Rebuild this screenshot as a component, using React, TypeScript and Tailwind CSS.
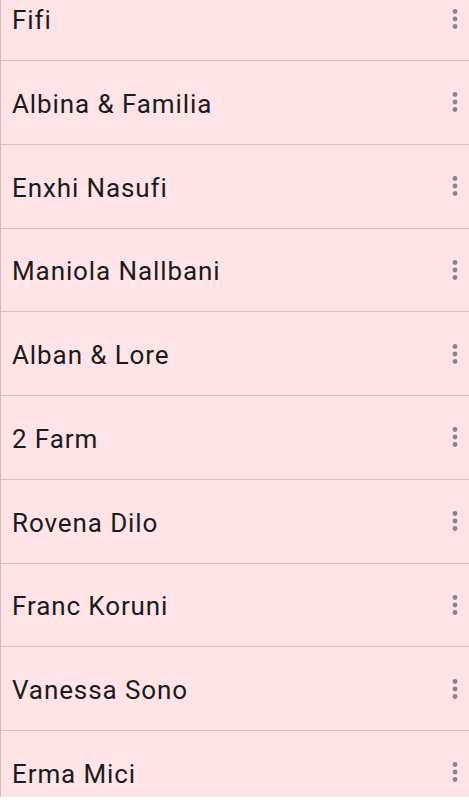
const names = [
  "Fifi",
  "Albina & Familia",
  "Enxhi Nasufi",
  "Maniola Nallbani",
  "Alban & Lore",
  "2 Farm",
  "Rovena Dilo",
  "Franc Koruni",
  "Vanessa Sono",
  "Erma Mici",
];

function MoreIcon() {
  return (
    <svg width="8" height="24" viewBox="0 0 8 24" className="text-[#8a8486]">
      <circle cx="4" cy="4.5" r="2.4" fill="currentColor" />
      <circle cx="4" cy="12" r="2.4" fill="currentColor" />
      <circle cx="4" cy="19.5" r="2.4" fill="currentColor" />
    </svg>
  );
}

export default function App() {
  return (
    <div className="h-[800px] w-[469px] bg-white overflow-hidden font-['Roboto',sans-serif]">
      <div className="h-[797px] overflow-hidden bg-[#fee4e7] border-l border-[#d9b9be]">
        <div className="-mt-[22.75px]">
          {names.map((n) => (
            <div
              key={n}
              className="h-[83.75px] flex items-center justify-between pl-[11px] pr-[10px] border-b border-[#ebb8c0]"
            >
              <span className="text-[26px] tracking-[0.9px] font-normal text-[#1b1b1b] leading-none pt-[3px]">
                {n}
              </span>
              <MoreIcon />
            </div>
          ))}
        </div>
      </div>
    </div>
  );
}
